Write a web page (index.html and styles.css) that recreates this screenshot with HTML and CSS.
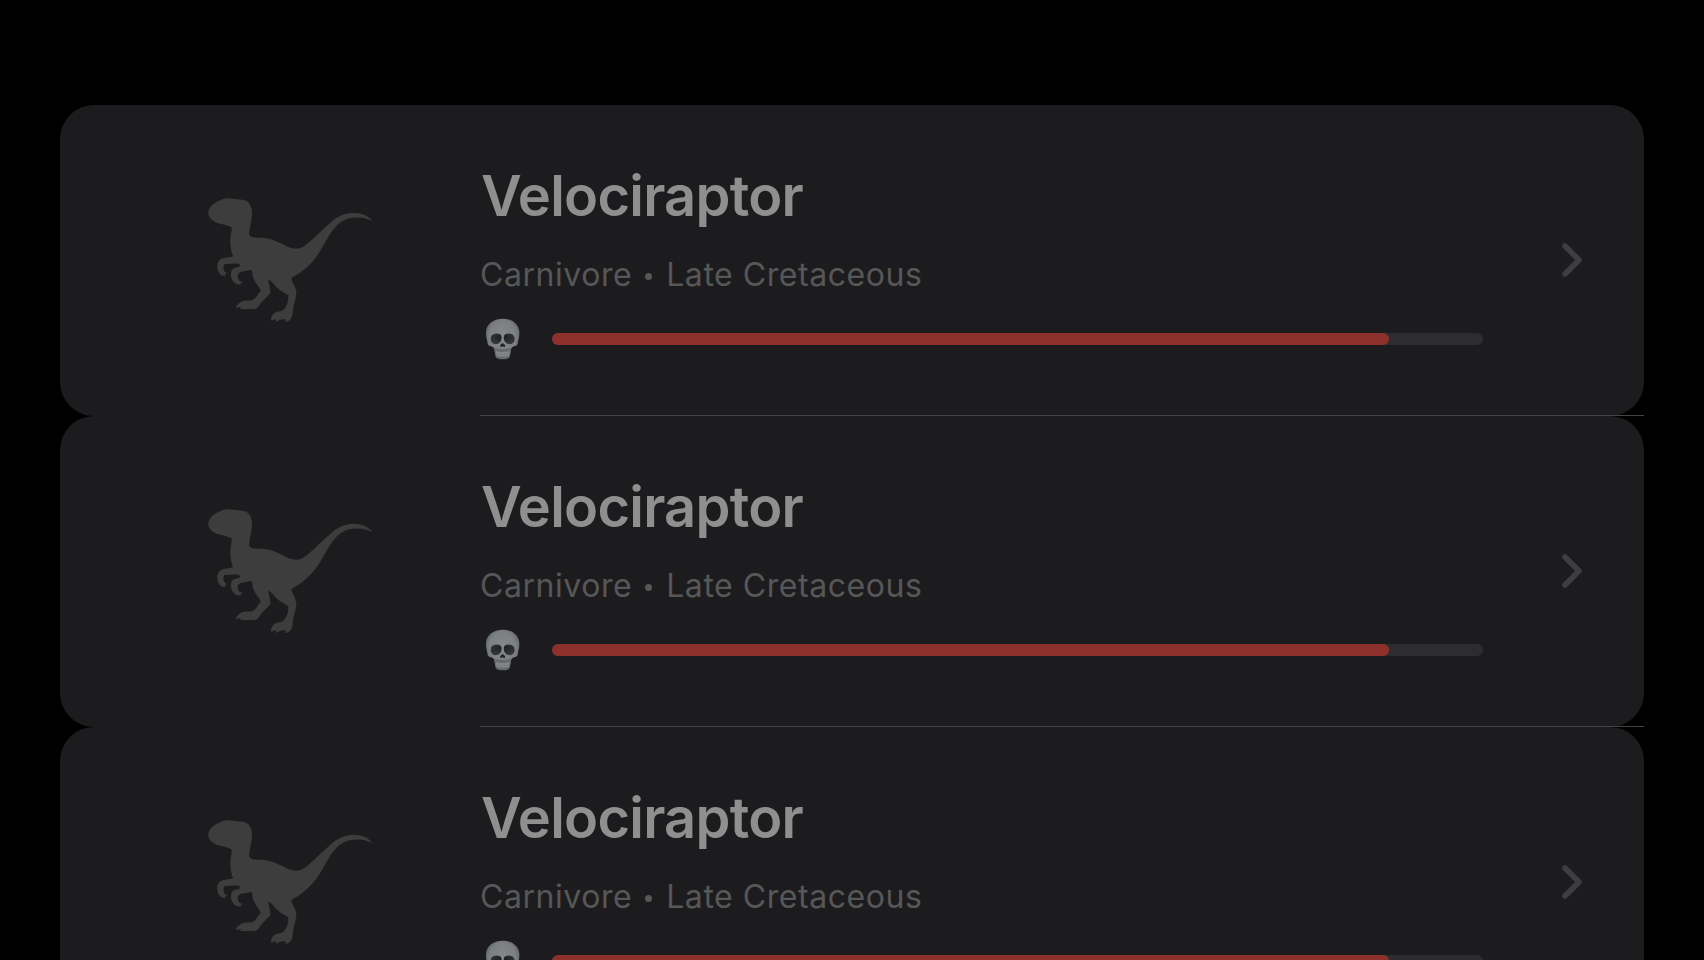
FILE: index.html
```html
<!DOCTYPE html>
<html lang="en">
<head>
<meta charset="utf-8">
<title>Dinosaurs</title>
<link rel="stylesheet" href="styles.css">
</head>
<body>
<svg class="symbols" aria-hidden="true">
  <defs>
    <radialGradient id="bone" cx="50%" cy="45%" r="58%">
      <stop offset="0" stop-color="#868a8c"/>
      <stop offset=".7" stop-color="#7b7f81"/>
      <stop offset="1" stop-color="#5e6163"/>
    </radialGradient>
    <radialGradient id="socket" cx="50%" cy="35%" r="65%">
      <stop offset="0" stop-color="#1b1c1d"/>
      <stop offset="1" stop-color="#37393a"/>
    </radialGradient>
  </defs>
  <symbol id="raptor" viewBox="0 0 540 435">
    <path d="M25 82C27 67 37 57 51 50C64 45 72 39 85 40L132 45C147 48 156 64 156 84C156 107 148 128 147 148C150 156 158 158 170 158C204 157 224 165 249 178C266 188 281 194 299 190C317 184 337 163 358 143L398 107C421 88 444 82 469 84C491 86 506 94 518 109C502 101 484 96 466 98C445 98 426 105 411 121C391 142 380 165 367 187C352 214 332 240 308 257C295 267 285 272 274 279C275 290 286 303 289 319C290 337 280 360 279 374C278 386 277 393 275 397C273 405 266 410 255 412L258 404L251 403C243 403 235 407 227 411L229 403C223 403 217 407 213 406C212 396 218 387 227 382C237 377 245 381 253 371C264 359 265 344 265 331C251 323 240 317 230 307C221 299 215 286 205 285C206 299 213 314 211 325C200 336 192 345 183 354C177 363 173 371 165 372L120 372L124 367C118 366 112 370 107 368C111 358 121 349 134 347C145 346 155 349 163 342C171 334 175 323 183 317C176 303 164 292 159 277C156 269 159 260 154 255C142 257 129 259 121 261C111 265 111 279 119 288L130 292L121 294L124 299L111 298C98 292 91 278 93 265C94 252 102 248 113 247C123 245 123 238 114 236C101 235 84 238 75 236C69 242 69 253 74 260L83 265L75 267L77 272L67 272C55 267 49 250 53 235C56 224 64 219 76 218C86 216 94 217 99 213C93 199 90 180 91 163C92 149 96 138 95 127C85 121 74 120 61 116C45 113 35 107 29 97C26 92 24 87 25 82Z"/>
  </symbol>
  <symbol id="skull" viewBox="0 0 108 132">
    <path fill="url(#bone)" d="M53 5C82 5 102 22 103 45C104 60 99 70 98 80C96 89 86 86 81 91C76 97 78 108 74 119C71 125 65 127 53 127C41 127 35 125 32 119C28 108 30 97 25 91C20 86 10 89 8 80C7 70 2 60 3 45C4 22 24 5 53 5Z"/>
    <path fill="#67696b" d="M27 92C42 97 64 97 79 92C75 104 77 112 73 118C64 125 42 125 33 118C29 111 31 102 27 92Z"/>
    <path fill="url(#socket)" d="M18 59C23 47 45 46 49 56C52 69 46 79 37 81C26 83 18 77 17 68ZM88 59C83 47 61 46 57 56C54 69 60 79 69 81C80 83 88 77 89 68Z"/>
    <path fill="#222324" d="M53 79C48 80 44 87 46 89Q50 91 53 87Q56 91 60 89C62 87 58 80 53 79Z"/>
    <path fill="#898c8e" d="M32 103Q53 107 74 103L71 117Q53 121 35 117Z"/>
    <path fill="none" stroke="#6c6f71" stroke-width="1.2" d="M40 103V118M47 104V119M53 104V120M59 104V119M66 103V118M33 111Q53 114 73 111"/>
  </symbol>
  <symbol id="chevron" viewBox="0 0 22 36">
    <path fill="none" stroke="#3e3e40" stroke-width="5.6" stroke-linecap="round" stroke-linejoin="round" d="M4 4L18 18L4 32"/>
  </symbol>
</svg>
<main class="list">
  <article class="row">
    <svg class="raptor"><use href="#raptor"/></svg>
    <div class="details">
      <h2 class="name">Velociraptor</h2>
      <p class="facts">Carnivore <span class="dot"></span> Late Cretaceous</p>
      <div class="danger"><svg class="skull"><use href="#skull"/></svg><div class="track"><div class="level"></div></div></div>
    </div>
    <svg class="chevron"><use href="#chevron"/></svg>
  </article>
  <div class="divider"></div>
  <article class="row">
    <svg class="raptor"><use href="#raptor"/></svg>
    <div class="details">
      <h2 class="name">Velociraptor</h2>
      <p class="facts">Carnivore <span class="dot"></span> Late Cretaceous</p>
      <div class="danger"><svg class="skull"><use href="#skull"/></svg><div class="track"><div class="level"></div></div></div>
    </div>
    <svg class="chevron"><use href="#chevron"/></svg>
  </article>
  <div class="divider"></div>
  <article class="row">
    <svg class="raptor"><use href="#raptor"/></svg>
    <div class="details">
      <h2 class="name">Velociraptor</h2>
      <p class="facts">Carnivore <span class="dot"></span> Late Cretaceous</p>
      <div class="danger"><svg class="skull"><use href="#skull"/></svg><div class="track"><div class="level"></div></div></div>
    </div>
    <svg class="chevron"><use href="#chevron"/></svg>
  </article>
</main>
</body>
</html>
```
FILE: styles.css
```css
* { box-sizing: border-box; }
body {
  margin: 0;
  background: #000;
  font-family: Inter, "Liberation Sans", sans-serif;
}
.symbols { position: absolute; width: 0; height: 0; }
.list {
  display: flex;
  flex-direction: column;
  height: 960px;
  overflow: hidden;
  padding: 105px 60px 0;
}
.row {
  display: flex;
  align-items: flex-start;
  flex: none;
  height: 311px;
  padding-left: 140px;
  border-radius: 34px;
  background: #1c1c1e;
}
.raptor {
  flex: none;
  width: 180px;
  height: 145px;
  margin: 80px 100px 0 0;
  fill: #3d3d3d;
}
.details {
  flex: none;
  width: 1003px;
  padding-top: 56px;
}
.name {
  margin: 0 0 0 1px;
  height: 70px;
  font-size: 56px;
  font-weight: 600;
  line-height: 71px;
  letter-spacing: -0.75px;
  color: #8f8f8f;
  white-space: nowrap;
}
.facts {
  display: flex;
  align-items: center;
  margin: 24px 0 0;
  height: 40px;
  font-size: 32px;
  line-height: 40px;
  letter-spacing: 0.55px;
  color: #575757;
  white-space: nowrap;
}
.dot {
  width: 7px;
  height: 7px;
  margin: 3px 14px 0 13px;
  border-radius: 50%;
  background: #575757;
}
.danger {
  display: flex;
  align-items: center;
  height: 44px;
  margin-top: 22px;
  padding-left: 5px;
}
.skull {
  flex: none;
  width: 36px;
  height: 44px;
  margin-right: 31px;
}
.track {
  flex: 1;
  height: 12px;
  border-radius: 6px;
  background: #2d2d2f;
}
.level {
  width: 837px;
  height: 12px;
  border-radius: 6px;
  background: #8e302c;
}
.chevron {
  width: 22px;
  height: 36px;
  margin: 137px 0 0 78px;
}
.divider {
  flex: none;
  height: 1px;
  margin: -1px 0 0 420px;
  background: #444446;
}
```
